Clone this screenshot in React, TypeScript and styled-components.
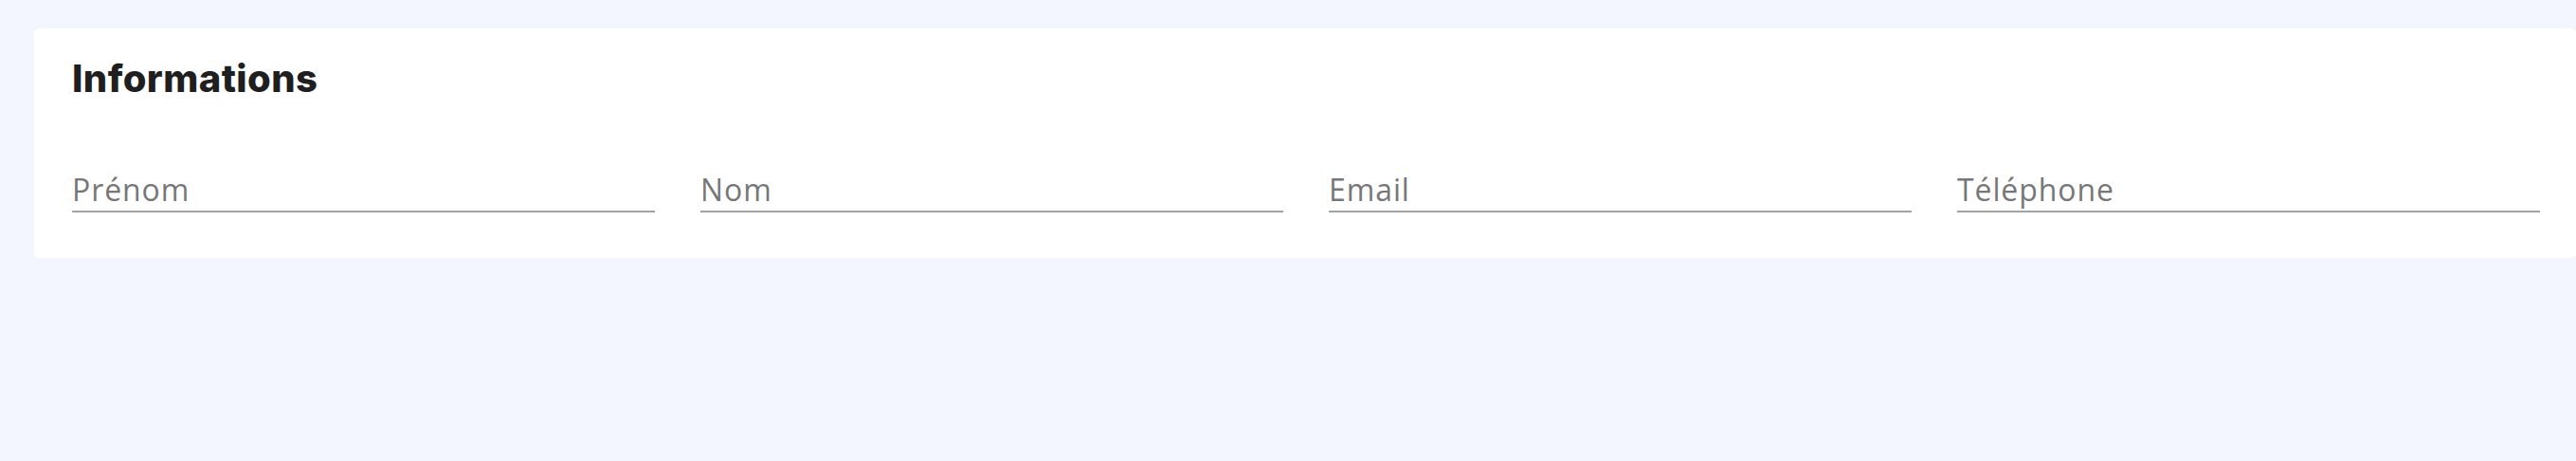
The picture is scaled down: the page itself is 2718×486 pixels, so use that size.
import styled, { createGlobalStyle } from "styled-components";

const Global = createGlobalStyle`
  html, body {
    margin: 0;
    padding: 0;
    background: #f3f6fe;
  }
  body {
    font-family: "Open Sans", "Noto Sans", sans-serif;
  }
`;

const Page = styled.div`
  min-height: 486px;
  padding: 30px 0 0 36px;
  box-sizing: border-box;
`;

const Card = styled.section`
  background: #fff;
  border-radius: 6px;
  padding: 33px 38px 48px 40px;
`;

const Title = styled.h2`
  margin: 0;
  font-family: Inter, "Liberation Sans", sans-serif;
  font-weight: 800;
  font-size: 40px;
  line-height: 40px;
  letter-spacing: 0.4px;
  color: #1f1f1f;
`;

const Fields = styled.div`
  display: grid;
  grid-template-columns: repeat(4, 1fr);
  column-gap: 48px;
  margin-top: 75px;
`;

const Input = styled.input`
  display: block;
  width: 100%;
  box-sizing: border-box;
  height: 46px;
  padding: 0 0 1px;
  border: none;
  border-bottom: 2px solid #a3a3a3;
  background: transparent;
  outline: none;
  font-family: "Open Sans", "Noto Sans", sans-serif;
  font-size: 32px;
  letter-spacing: 0.9px;
  color: #333;

  &::placeholder {
    color: #777;
    opacity: 1;
  }
`;

const fields = ["Prénom", "Nom", "Email", "Téléphone"];

export default function App() {
  return (
    <>
      <Global />
      <Page>
        <Card>
          <Title>Informations</Title>
          <Fields>
            {fields.map((f) => (
              <Input key={f} placeholder={f} aria-label={f} />
            ))}
          </Fields>
        </Card>
      </Page>
    </>
  );
}
